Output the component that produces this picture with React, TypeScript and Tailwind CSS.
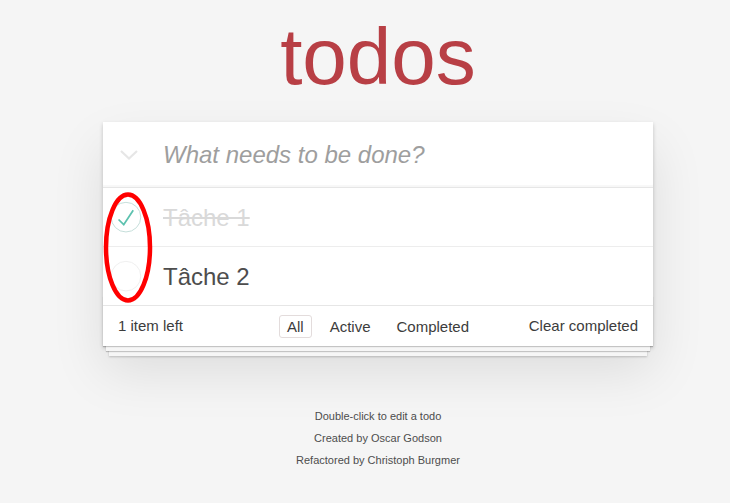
const todos = [
  { id: 1, title: 'Tâche 1', done: true },
  { id: 2, title: 'Tâche 2', done: false },
];

function Toggle({ done }: { done: boolean }) {
  return (
    <svg width="40" height="40" viewBox="-10 -18 100 135" className="shrink-0">
      <circle cx="50" cy="50" r="50" fill="none" stroke={done ? '#bddad5' : '#ededed'} strokeWidth="3" />
      {done && <path d="M72 25L42 71 27 56l-4 4 20 20 34-52z" fill="#5dc2af" />}
    </svg>
  );
}

export default function App() {
  const left = todos.filter((t) => !t.done).length;

  return (
    <div className="relative min-h-screen bg-[#f5f5f5] font-['Liberation_Sans',Arial,sans-serif] text-[#4d4d4d]">
      <div className="ml-[103px] w-[550px] pt-[17px]">
        <h1 className="text-center text-[80px] leading-[80px] font-normal text-[#b83f45]">todos</h1>

        <section className="relative mt-[25px] bg-white shadow-[0_2px_4px_0_rgba(0,0,0,0.2),0_25px_50px_0_rgba(0,0,0,0.1)]">
          <header className="flex h-[65px] items-center shadow-[inset_0_-2px_1px_rgba(0,0,0,0.03)]">
            <div className="flex w-[60px] justify-center pr-[8px]">
              <svg width="20" height="12" viewBox="0 0 20 12">
                <polyline points="2,2 10,9.5 18,2" fill="none" stroke="#e6e6e6" strokeWidth="2.2" />
              </svg>
            </div>
            <input
              className="h-full flex-1 bg-transparent pr-4 text-[24px] text-[#4d4d4d] outline-none placeholder:italic placeholder:text-[#9e9e9e]"
              placeholder="What needs to be done?"
            />
          </header>

          <ul className="border-t border-[#e6e6e6]">
            {todos.map((t) => (
              <li
                key={t.id}
                className="flex h-[59px] items-center border-b border-[#ededed] last:h-[58px] last:border-b-0"
              >
                <Toggle done={t.done} />
                <span
                  className={
                    'pl-[20px] text-[24px] leading-[29px] ' +
                    (t.done ? 'text-[#d9d9d9] line-through' : 'text-[#4d4d4d]')
                  }
                >
                  {t.title}
                </span>
              </li>
            ))}
          </ul>

          <footer className="relative grid h-[41px] grid-cols-[1fr_auto_1fr] items-center border-t border-[#e6e6e6] px-[15px] text-[15px] text-[#3c3c3c]">
            <div className="pointer-events-none absolute inset-x-0 bottom-0 h-[50px] overflow-hidden shadow-[0_1px_1px_rgba(0,0,0,0.2),0_8px_0_-3px_#f6f6f6,0_9px_1px_-3px_rgba(0,0,0,0.2),0_16px_0_-6px_#f6f6f6,0_17px_2px_-6px_rgba(0,0,0,0.2)]" />
            <span className="relative justify-self-start">{left} item left</span>
            <div className="relative flex gap-[10px]">
              <a className="rounded-[3px] border border-[#e3dcdc] px-[7px] py-[3px] leading-[15px]">All</a>
              <a className="rounded-[3px] border border-transparent px-[7px] py-[3px] leading-[15px]">Active</a>
              <a className="rounded-[3px] border border-transparent px-[7px] py-[3px] leading-[15px]">Completed</a>
            </div>
            <span className="relative justify-self-end">Clear completed</span>
          </footer>
        </section>

        <div className="mt-[65px] flex flex-col items-center gap-[11px] text-[11px] leading-[11px] text-[#4d4d4d]">
          <p>Double-click to edit a todo</p>
          <p>Created by Oscar Godson</p>
          <p>Refactored by Christoph Burgmer</p>
        </div>
      </div>

      <svg className="pointer-events-none absolute left-0 top-0" width="730" height="503">
        <ellipse cx="128" cy="247.5" rx="22" ry="53" fill="none" stroke="#f00" strokeWidth="4.5" />
      </svg>
    </div>
  );
}
